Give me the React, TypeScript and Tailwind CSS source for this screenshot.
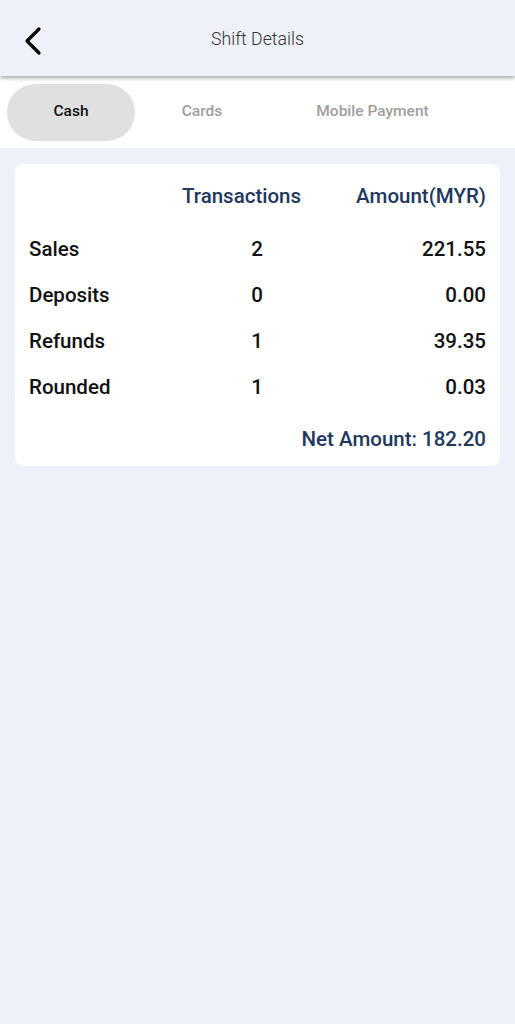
const ROWS = [
  { label: 'Sales', count: 2, amount: '221.55' },
  { label: 'Deposits', count: 0, amount: '0.00' },
  { label: 'Refunds', count: 1, amount: '39.35' },
  { label: 'Rounded', count: 1, amount: '0.03' },
];

const TABS = ['Cash', 'Cards', 'Mobile Payment'];

export default function App() {
  return (
    <div className="min-h-[1024px] w-[515px] bg-[#eef1f9] font-['Roboto',sans-serif]">
      {/* header */}
      <div className="relative z-10 flex h-[76px] items-center bg-[#eef1f9] shadow-[0_2px_4px_rgba(0,0,0,0.35)]">
        <button type="button" className="absolute left-[18px] top-[22px] p-1">
          <svg width="22" height="30" viewBox="0 0 22 30" fill="none">
            <path d="M17 3 L5 15 L17 27" stroke="#000" strokeWidth="3.2" strokeLinecap="round" strokeLinejoin="round" />
          </svg>
        </button>
        <p className="mt-[2px] w-full text-center text-[17.7px] font-light text-[#333]">Shift Details</p>
      </div>

      {/* tabs */}
      <div className="flex h-[72px] items-center bg-white pl-[7px]">
        {TABS.map((tab, i) => (
          <div
            key={tab}
            className={`flex h-[57px] items-center justify-center rounded-full text-[15.5px] font-medium
              ${i === 0 ? 'w-[128px] bg-[#e0e0e0] text-[#111]' : 'text-[#9e9e9e]'}
              ${i === 1 ? 'w-[134px]' : ''}
              ${i === 2 ? 'w-[207px]' : ''}`}
          >
            {tab}
          </div>
        ))}
      </div>

      {/* summary card */}
      <div className="px-[15px] pt-[16px]">
        <div className="rounded-lg bg-white px-[14px] pt-[20px] pb-[15px]">
          <div className="flex items-center justify-between pl-[153px] text-[20.5px] leading-[24px] font-medium text-[#22375e]">
            <span>Transactions</span>
            <span>Amount(MYR)</span>
          </div>

          <div className="mt-[18px] flex flex-col">
            {ROWS.map((row) => (
              <div key={row.label} className="grid h-[46px] grid-cols-[170px_116px_1fr] items-center text-[20.5px] font-medium text-[#111]">
                <span>{row.label}</span>
                <span className="text-center">{row.count}</span>
                <span className="text-right">{row.amount}</span>
              </div>
            ))}
          </div>

          <p className="mt-[17px] text-right text-[20.5px] leading-[24px] font-medium text-[#22375e]">Net Amount: 182.20</p>
        </div>
      </div>
    </div>
  );
}
